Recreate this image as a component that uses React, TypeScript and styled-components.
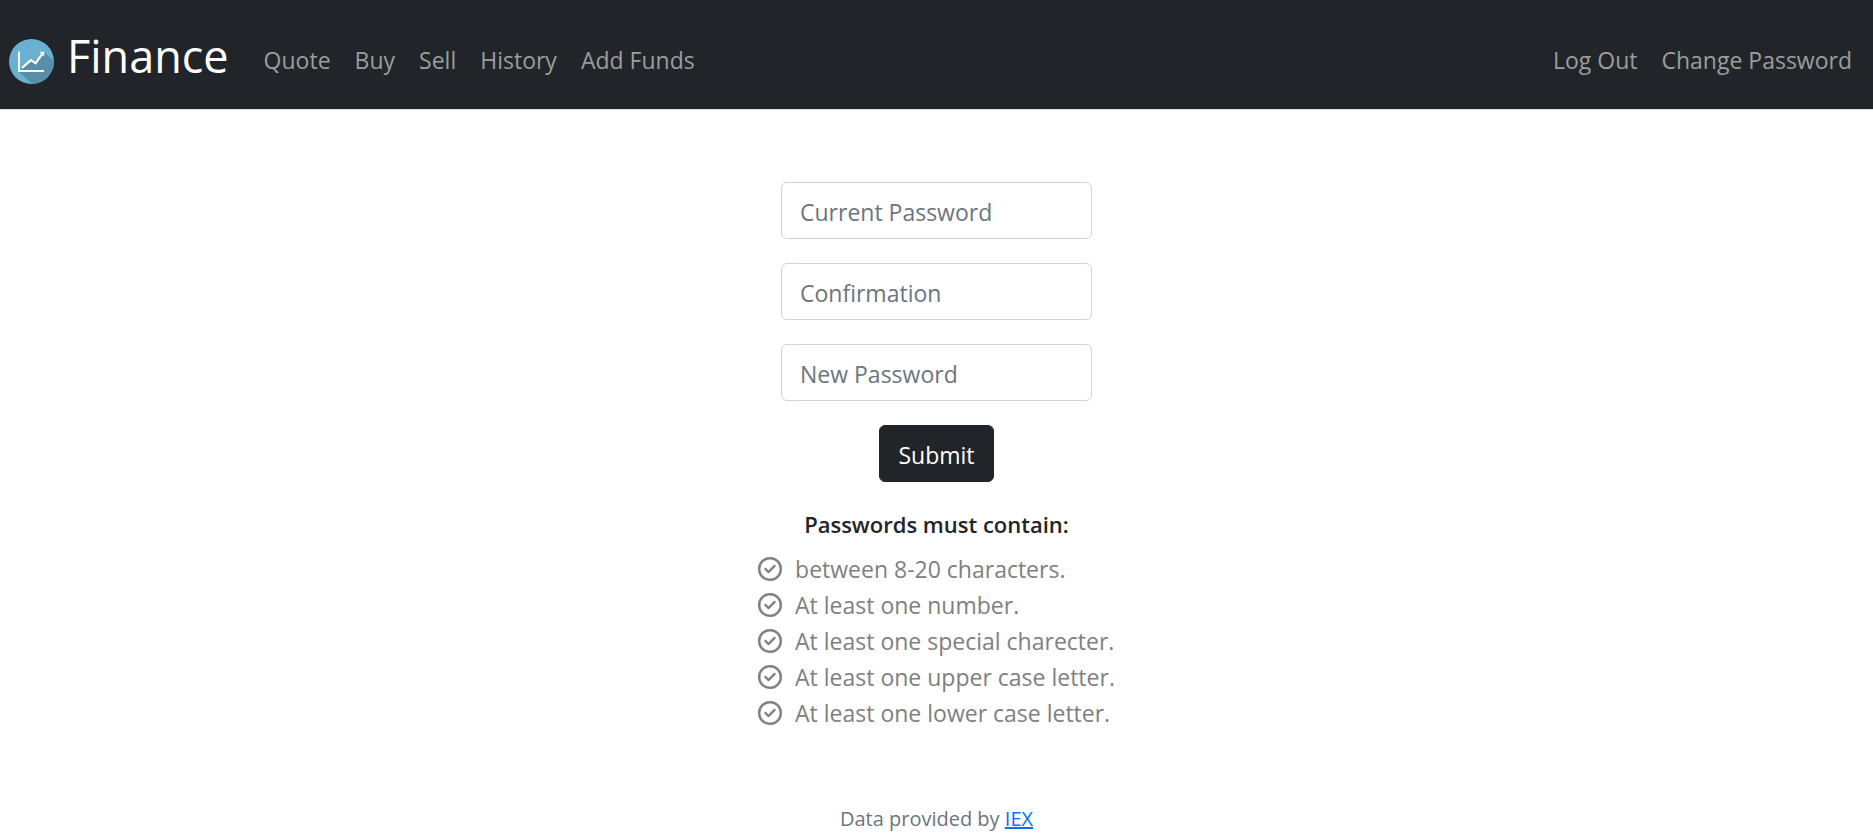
import React from 'react';
import styled, { createGlobalStyle } from 'styled-components';
import { FaRegCircleCheck } from 'react-icons/fa6';

const GlobalStyle = createGlobalStyle`
  *, *::before, *::after { box-sizing: border-box; }
  body {
    margin: 0;
    background: #fff;
    color: #212529;
    font-family: "Segoe UI", "Open Sans", "Noto Sans", sans-serif;
    font-size: 23px;
    line-height: 36px;
  }
`;

const Navbar = styled.nav`
  display: flex;
  align-items: center;
  padding: 20px 9px 9px;
  background: #212529;
  border-bottom: 1px solid #dee2e6;
`;

const Brand = styled.a`
  display: flex;
  align-items: center;
  gap: 13px;
  margin-right: 23px;
  padding-bottom: 8px;
  color: #fff;
  font-size: 45px;
  line-height: 72px;
  text-decoration: none;

  svg {
    margin-top: 10px;
  }
`;

const NavLinks = styled.ul`
  display: flex;
  margin: 0;
  padding: 0;
  list-style: none;

  & + & {
    margin-left: auto;
  }
`;

const NavLink = styled.a`
  display: block;
  padding: 12px;
  color: #9b9d9e;
  text-decoration: none;
`;

const Main = styled.main`
  display: flex;
  flex-direction: column;
  align-items: center;
  padding: 72px 24px;
`;

const PasswordForm = styled.form`
  display: flex;
  flex-direction: column;
  align-items: center;
  gap: 24px;
`;

const Field = styled.input`
  width: 311px;
  height: 57px;
  padding: 10px 18px 8px;
  border: 1px solid #ced4da;
  border-radius: 6px;
  background: #fff;
  color: #212529;
  font: inherit;

  &::placeholder {
    color: #6c757d;
    opacity: 1;
  }
`;

const SubmitButton = styled.button`
  height: 57px;
  padding: 10px 18px 8px;
  border: 1px solid #212529;
  border-radius: 6px;
  background: #212529;
  color: #fff;
  font: inherit;
`;

const RulesTitle = styled.h1`
  margin: 24px 0 9px;
  font-size: 22px;
  font-weight: 600;
  line-height: 36px;
`;

const Rules = styled.ul`
  margin: 0;
  padding: 0;
  list-style: none;
  color: #808080;
`;

const Rule = styled.li`
  display: flex;
  align-items: center;
  gap: 13px;
`;

const Footer = styled.footer`
  padding: 0 24px;
  color: #6c757d;
  font-size: 20px;
  line-height: 32px;
  text-align: center;

  a {
    color: #0d6efd;
  }
`;

const Logo = () => (
  <svg width="45" height="45" viewBox="0 0 45 45" aria-hidden="true">
    <defs>
      <clipPath id="disc">
        <circle cx="22.5" cy="22.5" r="22.5" />
      </clipPath>
    </defs>
    <g clipPath="url(#disc)">
      <rect width="45" height="45" fill="#6ab0d0" />
      <path d="M35 13 L60 36 V60 H40 L9.500 32.500 L13 29 L22 21.500 L27 24.500 Z" fill="#578fa8" />
    </g>
    <path d="M10 12.500 V32 H35" fill="none" stroke="#fff" strokeWidth="1.800" />
    <path d="M12.900 29 L22 21.200 L26.600 24.300 L33.500 14.500" fill="none" stroke="#fff" strokeWidth="2.200" />
    <path d="M30.500 13 L35.200 12.600 L35.200 17.500 Z" fill="#fff" />
  </svg>
);

const mainLinks = ['Quote', 'Buy', 'Sell', 'History', 'Add Funds'];
const accountLinks = ['Log Out', 'Change Password'];
const fields = ['Current Password', 'Confirmation', 'New Password'];
const rules = [
  'between 8-20 characters.',
  'At least one number.',
  'At least one special charecter.',
  'At least one upper case letter.',
  'At least one lower case letter.',
];

const LinkList = ({ items }: { items: string[] }) => (
  <NavLinks>
    {items.map((item) => (
      <li key={item}>
        <NavLink href="#">{item}</NavLink>
      </li>
    ))}
  </NavLinks>
);

export default function App() {
  return (
    <>
      <GlobalStyle />
      <Navbar>
        <Brand href="#">
          <Logo />
          <span>Finance</span>
        </Brand>
        <LinkList items={mainLinks} />
        <LinkList items={accountLinks} />
      </Navbar>
      <Main>
        <PasswordForm onSubmit={(event) => event.preventDefault()}>
          {fields.map((label) => (
            <Field key={label} type="password" placeholder={label} aria-label={label} />
          ))}
          <SubmitButton type="submit">Submit</SubmitButton>
        </PasswordForm>
        <RulesTitle>Passwords must contain:</RulesTitle>
        <Rules>
          {rules.map((rule) => (
            <Rule key={rule}>
              <FaRegCircleCheck size={24} strokeWidth={6} aria-hidden="true" />
              <span>{rule}</span>
            </Rule>
          ))}
        </Rules>
      </Main>
      <Footer>
        Data provided by <a href="#">IEX</a>
      </Footer>
    </>
  );
}
